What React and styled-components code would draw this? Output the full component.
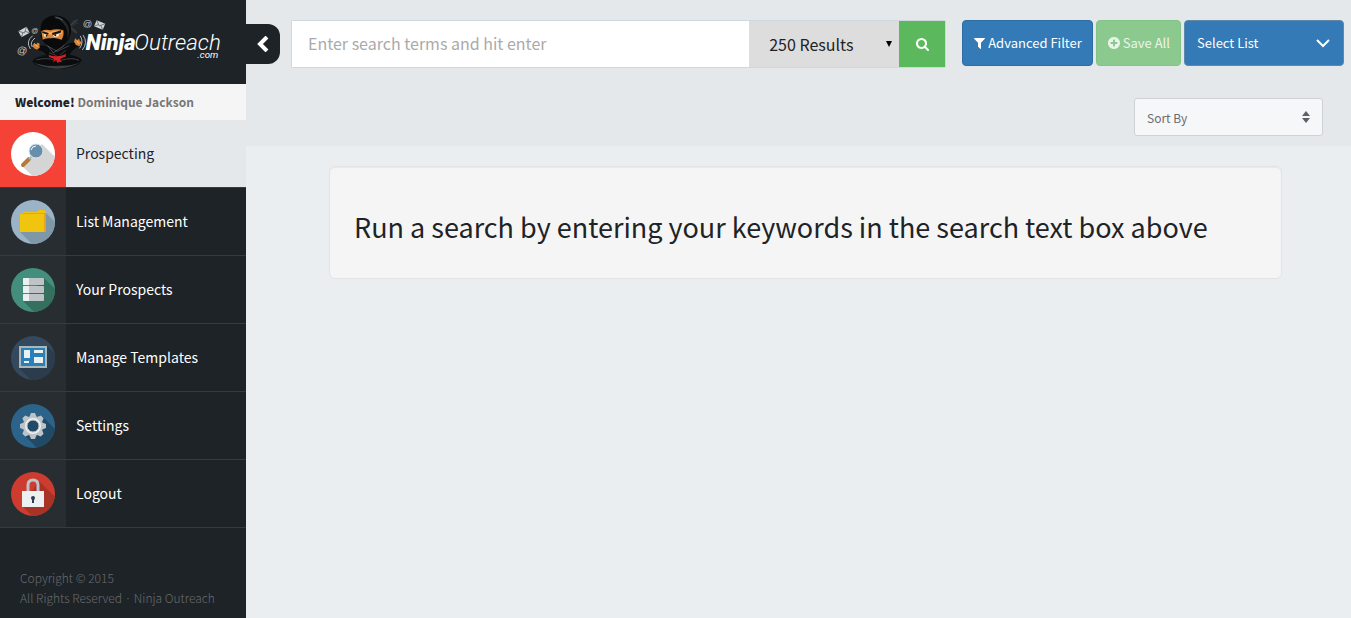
import React, { useState } from 'react';
import styled, { createGlobalStyle } from 'styled-components';

const GlobalStyle = createGlobalStyle`
  *, *::before, *::after {
    box-sizing: border-box;
  }

  body {
    margin: 0;
    background: #eaeef1;
    color: #1e2327;
    font-family: "Noto Sans CJK KR", "Open Sans", sans-serif;
    font-size: 13px;
    line-height: 20px;
  }

  button, input, select {
    font: inherit;
  }
`;

const Page = styled.div`
  display: flex;
  min-height: 100vh;
`;

const Sidebar = styled.aside`
  flex: 0 0 246px;
  background: #1e2327;
`;

const LogoLink = styled.a`
  display: block;
  height: 84px;
  padding: 13px 15px;
`;

const Welcome = styled.p`
  margin: 0;
  padding: 8px 15px;
  background: #f5f5f5;
  color: #777;
  font-size: 12px;
  font-weight: 700;

  strong {
    color: #1e2327;
  }
`;

const MenuLink = styled.a`
  display: flex;
  height: 68px;
  border-bottom: 1px solid #353b3f;
  background: ${props => props.$active ? '#e4e8eb' : '#1e2327'};
  color: ${props => props.$active ? '#1e2327' : '#fff'};
  font-size: 14px;
  text-decoration: none;
`;

const MenuIcon = styled.span`
  display: flex;
  align-items: center;
  justify-content: center;
  flex: 0 0 66px;
  padding-top: 1px;
  background: ${props => props.$active ? '#f44336' : '#282d31'};
`;

const MenuLabel = styled.span`
  align-self: center;
  padding: 0 0 2px 10px;
`;

const Footer = styled.footer`
  padding: 40px 20px 10px;
  color: #686b6e;
  font-size: 12px;
  font-weight: 300;

  p {
    margin: 0;
  }
`;

const Content = styled.div`
  flex: 1;
  min-width: 0;
`;

const TopBar = styled.header`
  height: 146px;
  background: #e4e8eb;
`;

const Toolbar = styled.div`
  display: flex;
  align-items: flex-start;
  padding: 20px 7px 0 0;
`;

const Toggle = styled.button`
  display: flex;
  align-items: center;
  flex: 0 0 34px;
  height: 40px;
  margin: 4px 11px 0 0;
  padding: 0 11px;
  border: 0;
  border-radius: 0 12px 12px 0;
  background: #1e2327;
  color: #fff;
`;

const SearchForm = styled.form`
  display: flex;
  flex: 1;
  min-width: 0;
  height: 48px;
  margin-right: 16px;
  border: 1px solid #cfd8df;
  border-radius: 2px;
`;

const SearchInput = styled.input`
  flex: 1;
  min-width: 0;
  padding: 0 16px 2px;
  border: 0;
  background: #fff;
  font-size: 16px;

  &::placeholder {
    color: #aaa;
    opacity: 1;
  }
`;

const SelectBox = styled.span`
  position: relative;
  display: block;
  flex: 0 0 ${props => props.$width};

  svg {
    position: absolute;
    top: 50%;
    right: ${props => props.$iconRight};
    transform: translateY(-50%);
    pointer-events: none;
  }
`;

const Select = styled.select`
  display: block;
  width: 100%;
  height: 100%;
  margin: 0;
  appearance: none;
`;

const ResultsSelect = styled(Select)`
  padding: 0 20px;
  border: 0;
  background: #ddd;
  color: #1e2327;
  font-size: 16px;
`;

const ListSelect = styled(Select)`
  height: 46px;
  padding: 0 12px;
  border: 1px solid #5f88ad;
  border-radius: 4px;
  background: #337ab7;
  color: #fff;
`;

const SortSelect = styled(Select)`
  height: 38px;
  padding: 2px 12px 0;
  border: 1px solid #cfd2d5;
  border-radius: 3px;
  background: #f6f7f9;
  color: #6a6c6f;
  font-size: 12px;
`;

const SearchButton = styled.button`
  flex: 0 0 46px;
  padding: 0;
  border: 0;
  background: #5cb85c;
  color: #fff;

  svg {
    display: block;
    margin: 0 auto;
  }
`;

const Actions = styled.div`
  display: flex;
  gap: 3px;
`;

const Button = styled.button`
  display: flex;
  align-items: center;
  gap: 3px;
  height: 46px;
  padding: 0 10px 0 11px;
  border: 1px solid ${props => props.$green ? '#82c485' : '#2e6da4'};
  border-radius: 4px;
  background: ${props => props.$green ? '#8cc98f' : '#337ab7'};
  color: ${props => props.$green ? '#eaf5ea' : '#fff'};
  white-space: nowrap;
`;

const SortRow = styled.div`
  display: flex;
  justify-content: flex-end;
  padding: 30px 28px 0;
`;

const Main = styled.main`
  padding: 20px 69px 20px 83px;
`;

const Well = styled.section`
  padding: 40px 24px 31px;
  border: 1px solid #e3e3e3;
  border-radius: 6px;
  background: #f5f5f5;
  box-shadow: inset 0 1px 1px rgba(0, 0, 0, 0.05);
`;

const Heading = styled.h1`
  margin: 0;
  font-size: 27px;
  font-weight: 400;
  line-height: 40px;
`;

const Glyph = ({ box, width, d }) => (
  <svg width={width} height="14" viewBox={box} fill="currentColor" aria-hidden="true">
    <path d={d} />
  </svg>
);

const glyphs = {
  filter: {
    box: '192 0 1408 1792',
    width: 11,
    d: 'M1595 295q17 41-14 70l-493 493v742q0 42-39 59-13 5-25 5-27 0-45-19l-256-256q-19-19-19-45v-486l-493-493q-31-29-14-70 17-39 59-39h1280q42 0 59 39z',
  },
  search: {
    box: '64 0 1664 1792',
    width: 13,
    d: 'M1216 832q0-185-131.500-316.500t-316.500-131.500-316.500 131.500-131.500 316.500 131.500 316.500 316.500 131.500 316.500-131.500 131.500-316.500zm512 832q0 52-38 90t-90 38q-54 0-90-38l-343-342q-179 124-399 124-143 0-273.500-55.500t-225-150-150-225-55.500-273.500 55.500-273.500 150-225 225-150 273.500-55.500 273.500 55.500 225 150 150 225 55.500 273.500q0 220-124 399l343 343q37 37 37 90z',
  },
  plus: {
    box: '128 0 1536 1792',
    width: 12,
    d: 'M1344 960v-128q0-26-19-45t-45-19h-256v-256q0-26-19-45t-45-19h-128q-26 0-45 19t-19 45v256h-256q-26 0-45 19t-19 45v128q0 26 19 45t45 19h256v256q0 26 19 45t45 19h128q26 0 45-19t19-45v-256h256q26 0 45-19t19-45zm320-64q0 209-103 385.500t-279.500 279.500-385.500 103-385.500-103-279.500-279.500-103-385.500 103-385.500 279.500-279.500 385.500-103 385.500 103 279.500 279.500 103 385.500z',
  },
};

const Envelope = ({ transform }) => (
  <g transform={transform}>
    <rect x="-14" y="-10" width="28" height="20" fill="#d3d5d6" />
    <path d="M-14 -10L0 3L14 -10M-14 10L-4 0M14 10L4 0" fill="none" stroke="#50555a" strokeWidth="2" />
  </g>
);

const Logo = () => (
  <svg width="208" height="57" viewBox="45 39 624 171" role="img" aria-label="NinjaOutreach.com">
    <ellipse cx="170" cy="184" rx="72" ry="23" fill="#121416" />
    <path d="M103 190Q170 222 236 190Q170 207 103 190Z" fill="#3b4043" />

    <g fill="#c4c7c9" fontFamily="Liberation Sans, sans-serif">
      <text x="51" y="162" fontSize="31" transform="rotate(8 66 152)">@</text>
      <text x="94" y="98" fontSize="21">@</text>
      <text x="248" y="80" fontSize="28">@</text>
    </g>
    <Envelope transform="translate(72 96) rotate(-28)" />
    <Envelope transform="translate(299 75) rotate(22)" />

    {/* headband tails */}
    <path d="M206 78Q219 56 236 56L229 66L238 70Q224 73 216 82Q231 88 233 103Q217 99 207 88Z" fill="#2b2d2f" />
    <path d="M211 78Q222 64 232 60M213 84Q224 90 230 99" fill="none" stroke="#555" strokeWidth="2" />

    {/* body and arms */}
    <path d="M116 137Q132 135 145 139L197 137Q209 127 224 127L236 138Q218 147 209 164Q240 171 246 181Q222 202 177 194Q137 204 98 184Q116 171 142 169Q133 151 109 150Z" fill="#0b0c0d" />
    <path d="M139 136L172 154L208 137M147 158L170 167M197 151L180 165M109 180Q139 171 165 181M184 181Q216 171 237 181" fill="none" stroke="#3c4145" strokeWidth="3" />
    <path d="M143 137L160 158L193 137" fill="none" stroke="#74797d" strokeWidth="2" />
    <path d="M146 165Q173 174 198 162L197 170Q181 175 180 178L186 187L177 185L173 190L168 180L159 187L163 177L147 171Z" fill="#d51f28" />

    {/* hands */}
    <path d="M103 128L108 134L112 128L118 130L119 143L111 149L102 145L97 137Z" fill="#d98435" />
    <path d="M226 114L231 121L237 116L240 124L246 126L238 139L228 135L222 125Z" fill="#d98435" />
    <path d="M104 132L113 140M230 122L237 131" stroke="#ffbd70" strokeWidth="3" />

    {/* head */}
    <path d="M122 91Q119 57 155 47Q190 42 207 66Q221 91 205 119Q190 143 158 142Q131 137 123 112Z" fill="#090a0b" />
    <path d="M160 48Q184 48 201 72Q213 94 202 116Q206 85 189 69Q177 55 160 48Z" fill="#26282a" />
    <path d="M166 53Q177 52 188 60" fill="none" stroke="#606366" strokeWidth="3" />
    <path d="M124 94Q135 87 151 91Q171 84 190 91Q193 107 185 119Q165 111 151 115Q137 113 128 119Z" fill="#dc8538" />
    <path d="M127 96Q139 91 151 96Q169 90 188 94L184 103Q165 99 151 104Q137 100 128 105Z" fill="#f5ad61" />
    <path d="M127 94L146 99L144 104L127 99ZM156 99L184 91L182 98L158 105Z" fill="#17120f" />
    <path d="M132 103L144 106L142 111L132 109ZM160 106L177 102L175 109L162 111Z" fill="#fff" />
    <circle cx="140" cy="107" r="3" fill="#17120f" />
    <circle cx="166" cy="106" r="3" fill="#17120f" />

    {/* motion lines */}
    <path d="M98 107Q76 124 91 147M105 114Q88 127 97 141M241 108Q252 126 239 145M249 105Q265 128 247 150" fill="none" stroke="#b4b7b9" strokeWidth="3" />

    <g fill="#fff" fontFamily="Roboto, sans-serif" fontStyle="italic">
      <text x="257" y="151" fontSize="66" fontWeight="900">Ninja</text>
      <text x="403" y="151" fontSize="67" fontWeight="300">Outreach</text>
      <text x="592" y="174" fontSize="29" fontWeight="400">.com</text>
    </g>
  </svg>
);

const Disc = ({ id, fill, shade, shadow, children }) => (
  <svg width="45" height="45" viewBox="0 0 45 45" aria-hidden="true">
    <clipPath id={id}>
      <circle cx="22" cy="22" r="22" />
    </clipPath>
    <circle cx="22" cy="22" r="22" fill={fill} />
    <path d={shadow} fill={shade} clipPath={`url(#${id})`} />
    {children}
  </svg>
);

const ProspectingIcon = () => (
  <Disc id="disc-search" fill="#fff" shade="#d5d5d5" shadow="M11 34L31 12L52 33L36 58Z">
    <path d="M12 33L18 27" stroke="#b97838" strokeWidth="4" strokeLinecap="round" />
    <path d="M18 27L21 24" stroke="#9ec0d0" strokeWidth="2" />
    <circle cx="25" cy="19" r="7" fill="#678eaa" stroke="#d9e9ef" strokeWidth="1" />
    <path d="M20 18Q21 14 25 14" fill="none" stroke="#fff" strokeWidth="1" />
  </Disc>
);

const FolderIcon = () => (
  <Disc id="disc-folder" fill="#9ab3c7" shade="#7f98a8" shadow="M9 32L34 12L56 34L30 53Z">
    <path d="M12 12H26Q27 10 29 10H33Q35 10 35 13V32H12Z" fill="#e5a51b" />
    <path d="M12 12H26Q27 10 29 10H33Q35 10 35 13H12Z" fill="#f1c40f" />
    <path d="M9 14H33V32H9Z" fill="#f1c40f" />
  </Disc>
);

const ProspectsIcon = () => (
  <Disc id="disc-prospects" fill="#438e7c" shade="#35705f" shadow="M12 33L33 10L56 33L36 57Z">
    {[10, 18, 26].map(y => (
      <g key={y}>
        <rect x="12" y={y} width="21" height="7" rx="1" fill="#bdc3c7" />
        <path d={`M13 ${y}H18V${y + 7}H13Q12 ${y + 7} 12 ${y + 6}V${y + 1}Q12 ${y} 13 ${y}Z`} fill="#ecf0f1" />
      </g>
    ))}
  </Disc>
);

const TemplatesIcon = () => (
  <Disc id="disc-templates" fill="#34495e" shade="#2b3c4d" shadow="M8 32L36 10L60 34L32 56Z">
    <rect x="9" y="11" width="26" height="20" fill="#2980b9" stroke="#a9b7b9" strokeWidth="2" />
    <path d="M13 14H19V22H13ZM13 25H18V27H13ZM23 14H32V17H23ZM23 21H32V27H23Z" fill="#ecf0f1" />
  </Disc>
);

const SettingsIcon = () => (
  <Disc id="disc-settings" fill="#2c638a" shade="#214a66" shadow="M13 31L32 13L56 37L35 53Z">
    {[0, 45, 90, 135].map(angle => (
      <path key={angle} d="M20 9H24L26 14V30L24 35H20L18 30V14Z" fill="#bdc3c7" transform={`rotate(${angle} 22 22)`} />
    ))}
    <circle cx="22" cy="22" r="10" fill="#bdc3c7" />
    <circle cx="22" cy="22" r="7" fill="#214a66" stroke="#ecf0f1" strokeWidth="2" />
    <circle cx="22" cy="22" r="6" fill="none" stroke="#bdc3c7" strokeWidth="1" />
  </Disc>
);

const LogoutIcon = () => (
  <Disc id="disc-logout" fill="#cd3c2e" shade="#a83226" shadow="M11 34L28 9L56 37L34 57Z">
    <path d="M17 20V13Q17 8 22 8Q27 8 27 13V20" fill="none" stroke="#bdc3c7" strokeWidth="3" />
    <rect x="11" y="19" width="22" height="16" fill="#ecf0f1" />
    <circle cx="22" cy="26" r="2" fill="#2c3e50" />
    <path d="M21 26H23V31H21Z" fill="#2c3e50" />
  </Disc>
);

const menuItems = [
  { id: 'prospecting', label: 'Prospecting', Icon: ProspectingIcon },
  { id: 'lists', label: 'List Management', Icon: FolderIcon },
  { id: 'prospects', label: 'Your Prospects', Icon: ProspectsIcon },
  { id: 'templates', label: 'Manage Templates', Icon: TemplatesIcon },
  { id: 'settings', label: 'Settings', Icon: SettingsIcon },
  { id: 'logout', label: 'Logout', Icon: LogoutIcon },
];

function App() {
  const [active, setActive] = useState('prospecting');
  const [terms, setTerms] = useState('');
  const [collapsed, setCollapsed] = useState(false);

  return (
    <Page>
      <GlobalStyle />

      {!collapsed && (
        <Sidebar>
          <LogoLink href="#home">
            <Logo />
          </LogoLink>
          <Welcome><strong>Welcome!</strong> Dominique Jackson</Welcome>
          <nav>
            {menuItems.map(({ id, label, Icon }) => (
              <MenuLink key={id} href={`#${id}`} $active={id === active} onClick={() => setActive(id)}>
                <MenuIcon $active={id === active}>
                  <Icon />
                </MenuIcon>
                <MenuLabel>{label}</MenuLabel>
              </MenuLink>
            ))}
          </nav>
          <Footer>
            <p>Copyright © 2015</p>
            <p>All Rights Reserved · Ninja Outreach</p>
          </Footer>
        </Sidebar>
      )}

      <Content>
        <TopBar>
          <Toolbar>
            <Toggle type="button" aria-label="Toggle sidebar" onClick={() => setCollapsed(!collapsed)}>
              <svg width="12" height="16" viewBox="0 0 12 16" fill="none" stroke="currentColor" strokeWidth="4" aria-hidden="true">
                <path d="M10 1L3 8L10 15" />
              </svg>
            </Toggle>

            <SearchForm onSubmit={e => e.preventDefault()}>
              <SearchInput
                type="text"
                aria-label="Search terms"
                placeholder="Enter search terms and hit enter"
                value={terms}
                onChange={e => setTerms(e.target.value)}
              />
              <SelectBox $width="150px" $iconRight="7px">
                <ResultsSelect aria-label="Number of results">
                  <option>250 Results</option>
                </ResultsSelect>
                <svg width="6" height="6" viewBox="0 0 6 6" aria-hidden="true">
                  <path d="M0 0H6L3 6Z" fill="#000" />
                </svg>
              </SelectBox>
              <SearchButton type="submit" aria-label="Search">
                <Glyph {...glyphs.search} />
              </SearchButton>
            </SearchForm>

            <Actions>
              <Button type="button">
                <Glyph {...glyphs.filter} />
                Advanced Filter
              </Button>
              <Button type="button" $green disabled>
                <Glyph {...glyphs.plus} />
                Save All
              </Button>
              <SelectBox $width="160px" $iconRight="14px">
                <ListSelect aria-label="Select list">
                  <option>Select List</option>
                </ListSelect>
                <svg width="14" height="10" viewBox="0 0 14 10" fill="none" stroke="#fff" strokeWidth="2" aria-hidden="true">
                  <path d="M1 2L7 8L13 2" />
                </svg>
              </SelectBox>
            </Actions>
          </Toolbar>

          <SortRow>
            <SelectBox $width="189px" $iconRight="13px">
              <SortSelect aria-label="Sort by">
                <option>Sort By</option>
              </SortSelect>
              <svg width="8" height="12" viewBox="0 0 8 12" fill="#5e6063" aria-hidden="true">
                <path d="M4 0L8 5H0ZM0 7H8L4 12Z" />
              </svg>
            </SelectBox>
          </SortRow>
        </TopBar>

        <Main>
          <Well>
            <Heading>Run a search by entering your keywords in the search text box above</Heading>
          </Well>
        </Main>
      </Content>
    </Page>
  );
}

export default App;
